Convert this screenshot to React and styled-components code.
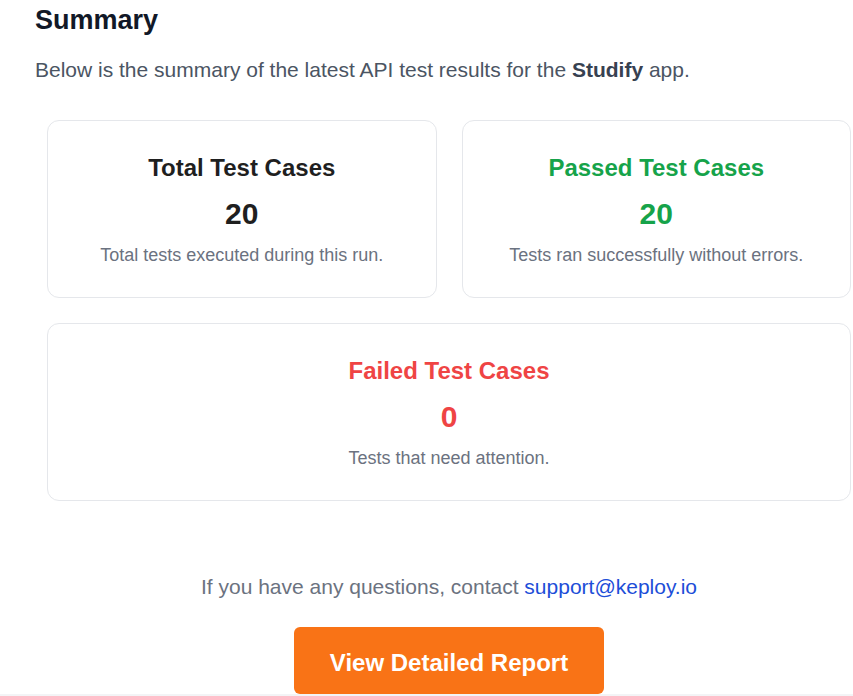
import React from 'react'
import styled, { createGlobalStyle } from 'styled-components'

const GlobalStyle = createGlobalStyle`
  html, body {
    margin: 0;
    padding: 0;
    background: #f3f4f6;
    font-family: "Liberation Sans", Arial, sans-serif;
  }
`

const stats = [
  { title: 'Total Test Cases', value: 20, text: 'Total tests executed during this run.', tone: 'neutral' },
  { title: 'Passed Test Cases', value: 20, text: 'Tests ran successfully without errors.', tone: 'success' },
  { title: 'Failed Test Cases', value: 0, text: 'Tests that need attention.', tone: 'danger', wide: true },
]

const tones = {
  neutral: '#1f1f1f',
  success: '#16a34a',
  danger: '#ef4444',
}

function App() {
  return (
    <>
      <GlobalStyle />
      <Main>
        <Heading>Summary</Heading>
        <Intro>
          Below is the summary of the latest API test results for the <strong>Studify</strong> app.
        </Intro>
        <Grid>
          {stats.map((s) => (
            <Card key={s.title} $wide={s.wide}>
              <CardTitle $tone={s.tone}>{s.title}</CardTitle>
              <CardValue $tone={s.tone}>{s.value}</CardValue>
              <CardText>{s.text}</CardText>
            </Card>
          ))}
        </Grid>
        <Contact>
          If you have any questions, contact <Link href="#">support@keploy.io</Link>
        </Contact>
        <ButtonRow>
          <ReportButton href="#">View Detailed Report</ReportButton>
        </ButtonRow>
      </Main>
    </>
  )
}

const Main = styled.main`
  background: #ffffff;
  padding: 0 0 0 35px;
  height: 694px;
  overflow: hidden;
  box-sizing: border-box;
`

const Heading = styled.h2`
  margin: 0;
  padding-top: 4px;
  font-size: 27px;
  line-height: 32px;
  font-weight: 700;
  color: #111827;
`

const Intro = styled.p`
  margin: 20px 0 0;
  font-size: 21px;
  line-height: 28px;
  color: #4b5563;

  strong {
    color: #374151;
  }
`

const Grid = styled.div`
  display: grid;
  grid-template-columns: 1fr 1fr;
  gap: 25px;
  width: 804px;
  margin: 36px 0 0 12px;
`

const Card = styled.div`
  grid-column: ${(p) => (p.$wide ? '1 / -1' : 'auto')};
  height: 178px;
  box-sizing: border-box;
  border: 1px solid #e5e7eb;
  border-radius: 12px;
  padding-top: 32px;
  text-align: center;
`

const CardTitle = styled.h3`
  margin: 0;
  font-size: 24px;
  line-height: 30px;
  font-weight: 700;
  color: ${(p) => tones[p.$tone]};
`

const CardValue = styled.div`
  margin-top: 13px;
  font-size: 30px;
  line-height: 36px;
  font-weight: 700;
  color: ${(p) => tones[p.$tone]};
`

const CardText = styled.p`
  margin: 11px 0 0;
  font-size: 18px;
  line-height: 24px;
  color: #6b7280;
`

const Contact = styled.p`
  width: 804px;
  margin: 72px 0 0 12px;
  text-align: center;
  font-size: 21px;
  line-height: 28px;
  color: #6b7280;
`

const Link = styled.a`
  color: #1d4ed8;
  text-decoration: none;
`

const ButtonRow = styled.div`
  width: 804px;
  margin: 26px 0 0 12px;
  display: flex;
  justify-content: center;
`

const ReportButton = styled.a`
  display: block;
  width: 310px;
  box-sizing: border-box;
  padding: 21px 0 17px;
  background: #f97316;
  color: #ffffff;
  border-radius: 6px;
  text-align: center;
  text-decoration: none;
  font-size: 24px;
  line-height: 29px;
  font-weight: 700;
`

export default App
